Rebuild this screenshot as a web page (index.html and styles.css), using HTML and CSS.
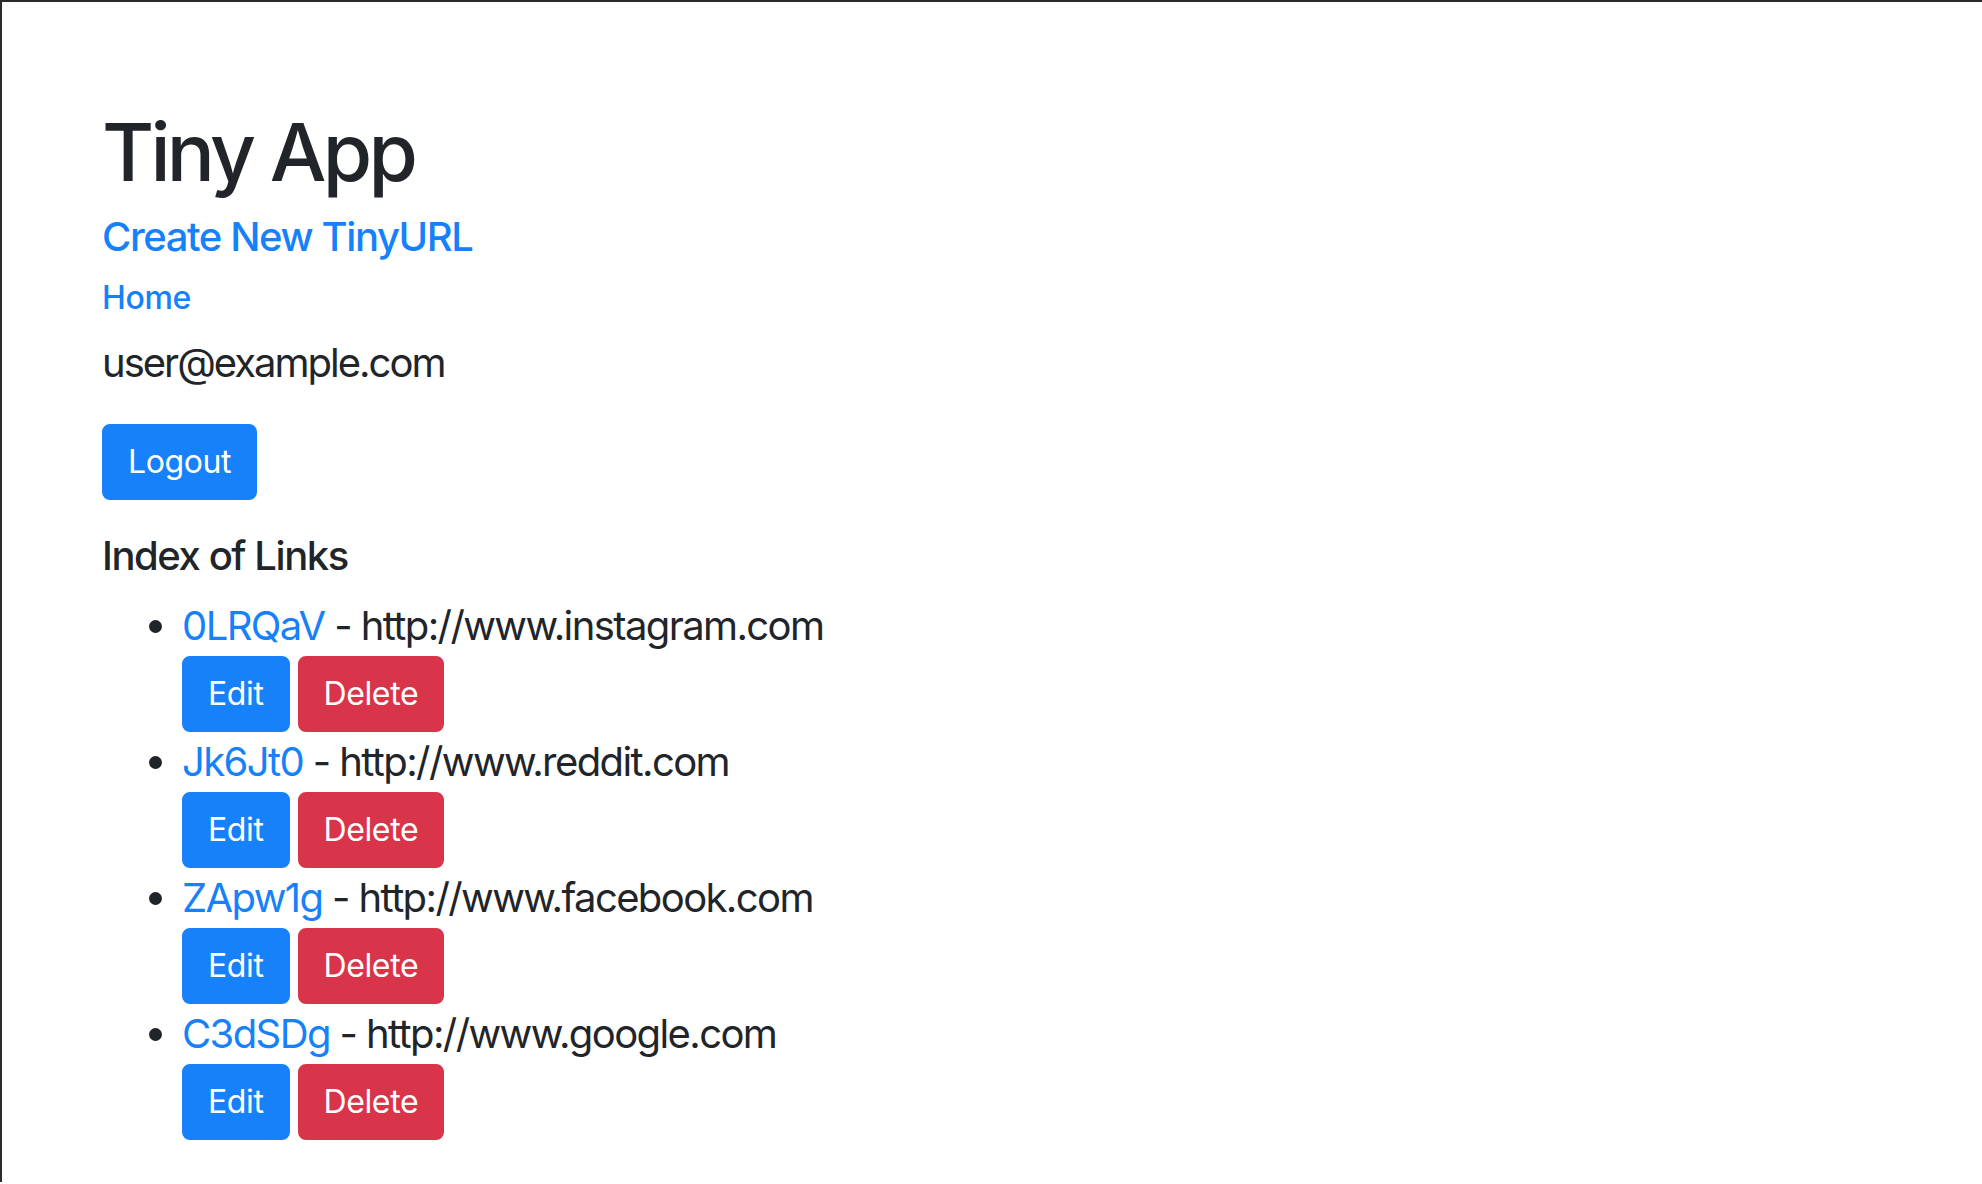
FILE: index.html
```html
<!DOCTYPE html>
<html lang="en">
<head>
<meta charset="utf-8">
<title>Tiny App</title>
<link rel="stylesheet" href="styles.css">
</head>
<body>
<main class="page">
  <h1 class="title">Tiny App</h1>
  <nav class="nav">
    <a class="nav-brand" href="#">Create New TinyURL</a>
    <a class="nav-home" href="#">Home</a>
    <p class="user">user@example.com</p>
    <form class="logout-form"><button type="button" class="btn btn-primary">Logout</button></form>
  </nav>
  <h2 class="section-title">Index of Links</h2>
  <ul class="links">
    <li class="link-item">
      <a class="short" href="#">0LRQaV</a> - http://www.instagram.com
      <div class="actions"><button type="button" class="btn btn-primary">Edit</button><button type="button" class="btn btn-danger">Delete</button></div>
    </li>
    <li class="link-item">
      <a class="short" href="#">Jk6Jt0</a> - http://www.reddit.com
      <div class="actions"><button type="button" class="btn btn-primary">Edit</button><button type="button" class="btn btn-danger">Delete</button></div>
    </li>
    <li class="link-item">
      <a class="short" href="#">ZApw1g</a> - http://www.facebook.com
      <div class="actions"><button type="button" class="btn btn-primary">Edit</button><button type="button" class="btn btn-danger">Delete</button></div>
    </li>
    <li class="link-item">
      <a class="short" href="#">C3dSDg</a> - http://www.google.com
      <div class="actions"><button type="button" class="btn btn-primary">Edit</button><button type="button" class="btn btn-danger">Delete</button></div>
    </li>
  </ul>
</main>
</body>
</html>
```

FILE: styles.css
```css
html, body {
  margin: 0;
  padding: 0;
  background: #ffffff;
}

body {
  font-family: Inter, "Noto Sans", "Liberation Sans", sans-serif;
  color: #212529;
  border-top: 2px solid #2b2b2b;
  border-left: 2px solid #2b2b2b;
  min-height: 1182px;
  box-sizing: border-box;
}

a {
  color: #1780fb;
  text-decoration: none;
}

.page {
  padding: 102px 0 0 100px;
}

.title {
  margin: 0;
  font-size: 80px;
  line-height: 96px;
  font-weight: 500;
  letter-spacing: -0.047em;
}

.nav {
  display: flex;
  flex-direction: column;
  align-items: flex-start;
}

.nav-brand {
  margin-top: 13px;
  font-size: 40px;
  line-height: 48px;
  font-weight: 500;
  letter-spacing: -0.035em;
}

.nav-home {
  margin-top: 13px;
  font-size: 32px;
  line-height: 48px;
  font-weight: 500;
  letter-spacing: -0.01em;
}

.user {
  margin: 11px 0 0;
  font-size: 40px;
  line-height: 60px;
  letter-spacing: -0.05em;
}

.logout-form {
  margin: 31px 0 0;
}

.btn {
  display: inline-block;
  font-family: inherit;
  font-size: 32px;
  line-height: 48px;
  font-weight: 400;
  letter-spacing: -0.012em;
  padding: 12px 24px;
  border: 2px solid transparent;
  border-radius: 8px;
  color: #ffffff;
  cursor: pointer;
}

.btn-primary {
  background: #1780fb;
  border-color: #1780fb;
}

.btn-danger {
  background: #d8354a;
  border-color: #d8354a;
}

.section-title {
  margin: 32px 0 0;
  font-size: 40px;
  line-height: 48px;
  font-weight: 500;
  letter-spacing: -0.036em;
}

.links {
  margin: 16px 0 0;
  padding-left: 80px;
  font-size: 40px;
  line-height: 60px;
  letter-spacing: -0.04em;
}

.actions {
  display: flex;
  gap: 8px;
  letter-spacing: normal;
}
```
